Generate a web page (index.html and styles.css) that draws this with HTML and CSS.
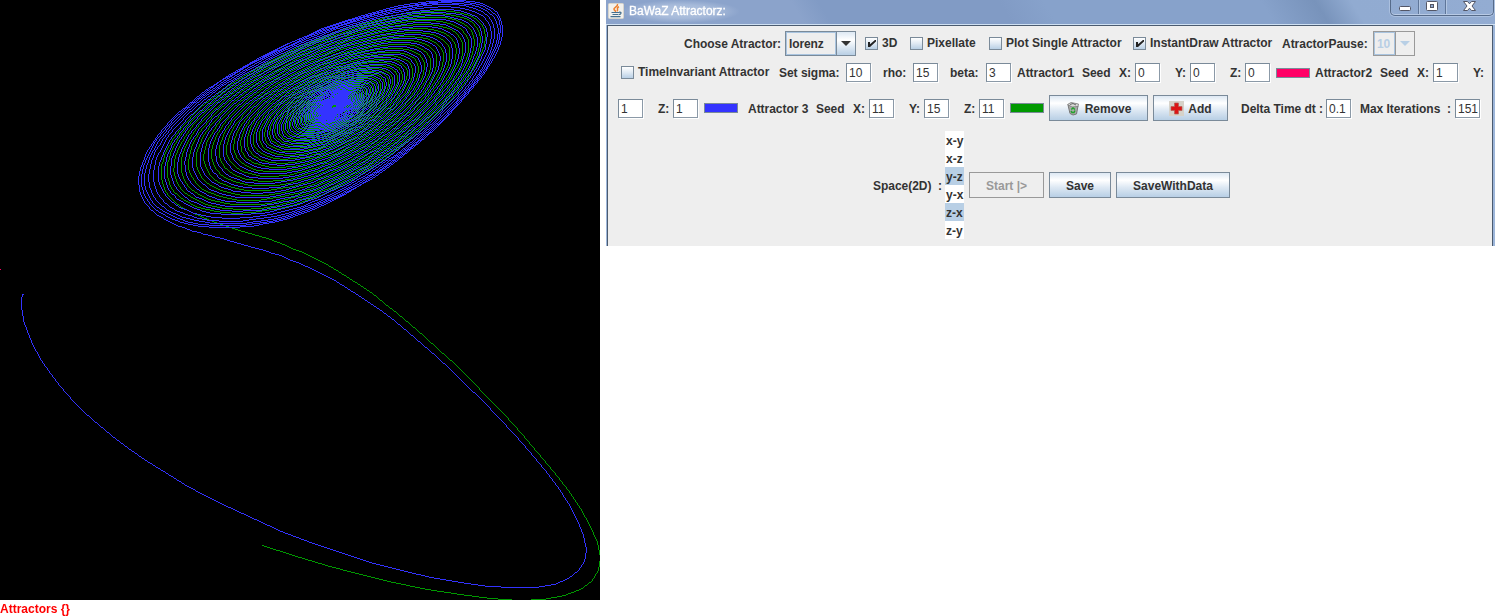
FILE: index.html
```html
<!DOCTYPE html>
<html lang="en">
<head>
<meta charset="utf-8">
<title>BaWaZ Attractorz</title>
<link rel="stylesheet" href="styles.css">
</head>
<body>
<main class="page">
  <section class="plot-panel">
    <canvas class="plot" id="plot" width="600" height="600"></canvas>
    <div class="plot-caption">Attractors {}</div>
  </section>

  <section class="window">
    <header class="titlebar">
      <svg class="java-icon" width="16" height="16" viewBox="0 0 16 16">
        <rect x=".5" y=".5" width="15" height="15" rx="1" fill="#f2f1ed" stroke="#d8d5cd"/>
        <path d="M9.500 1C10.500 3.500 5 4.500 6 6.500C6.600 7.500 8 7.700 7.500 9M11 3.800C7.500 5.200 11 6.300 9 8.200" fill="none" stroke="#ec7f2e" stroke-width="1.500"/>
        <path d="M3.500 9.500h8M4.500 11.500h5.500M2.500 13.700h10M11 9.300c3-.6 2.600 2.200-.5 2.400" fill="none" stroke="#45708f" stroke-width="1.200"/>
      </svg>
      <span class="title">BaWaZ Attractorz:</span>
      <div class="window-buttons">
        <svg class="window-glyphs" width="102" height="15" viewBox="0 0 102 15">
          <path d="M27.500 0v14M54.500 0v14" stroke="#5f7699"/>
          <path d="M28.500 0v14M55.500 0v14" stroke="#b3c7e3"/>
          <rect x="8.500" y="6.500" width="11" height="4" rx="1" fill="#fff" stroke="#535666"/>
          <rect x="35.500" y="1.500" width="11" height="9" rx="1" fill="#fff" stroke="#535666"/>
          <rect x="39.500" y="4.500" width="3" height="3" fill="#8ea8ce" stroke="#535666"/>
          <path d="M72.500 1.500h4l2 2.300l2-2.300h4l-3.500 4.500l3.500 4.500h-4l-2-2.300l-2 2.300h-4l3.500-4.500z" fill="#fff" stroke="#535666"/>
        </svg>
      </div>
    </header>

    <div class="content">
      <div class="row row-options">
        <span>Choose Atractor:</span>
        <div class="combo"><span class="combo-value">lorenz</span><span class="combo-arrow"></span></div>
        <label class="check"><i class="box on"></i>3D</label>
        <label class="check"><i class="box"></i>Pixellate</label>
        <label class="check"><i class="box"></i>Plot Single Attractor</label>
        <label class="check"><i class="box on"></i>InstantDraw Attractor</label>
        <span>AtractorPause:</span>
        <div class="combo combo-off"><span class="combo-value">10</span><span class="combo-arrow"></span></div>
      </div>

      <div class="row row-params">
        <label class="check"><i class="box"></i>TimeInvariant Attractor</label>
        <span>Set sigma:</span><span class="field">10</span>
        <span>rho:</span><span class="field">15</span>
        <span>beta:</span><span class="field">3</span>
        <span>Attractor1</span><span>Seed</span>
        <span>X:</span><span class="field">0</span>
        <span>Y:</span><span class="field">0</span>
        <span>Z:</span><span class="field">0</span>
        <span class="swatch pink"></span>
        <span>Attractor2</span><span>Seed</span>
        <span>X:</span><span class="field">1</span>
        <span>Y:</span>
      </div>

      <div class="row row-seeds">
        <span class="field">1</span>
        <span>Z:</span><span class="field">1</span>
        <span class="swatch blue"></span>
        <span>Attractor 3</span><span>Seed</span>
        <span>X:</span><span class="field">11</span>
        <span>Y:</span><span class="field">15</span>
        <span>Z:</span><span class="field">11</span>
        <span class="swatch green"></span>
        <span class="button remove">
          <svg width="14" height="15" viewBox="0 0 14 15">
            <path d="M2 4L12 5L10.500 13L7 14L4 12.500Z" fill="#a9aaa9" stroke="#777"/>
            <path d="M1.500 3.500L5 1.500L12.500 3L12 5.500L6 6Z" fill="#d9d9d7" stroke="#777" stroke-width=".8"/>
            <path d="M4 3.500L7 2.500L10 4" fill="none" stroke="#666"/>
            <path d="M5.300 8.500L7 7L9 8.500M9 9.500L8 11.500H6L5 10" fill="none" stroke="#22a32c" stroke-width="1.500"/>
          </svg>Remove</span>
        <span class="button add">
          <svg width="15" height="15" viewBox="0 0 15 15">
            <rect width="15" height="15" fill="#d6d2c9"/>
            <path d="M5.500 2H9.500V5.500H13V9.500H9.500V13H5.500V9.500H2V5.500H5.500Z" fill="#dc1515" stroke="#b56058" stroke-width=".7"/>
          </svg>Add</span>
        <span>Delta Time dt :</span><span class="field">0.1</span>
        <span>Max Iterations&nbsp; :</span><span class="field">151</span>
      </div>

      <div class="row row-actions">
        <span>Space(2D)&nbsp; :</span>
        <ul class="list">
          <li>x-y</li><li>x-z</li><li class="selected">y-z</li><li>y-x</li><li class="selected">z-x</li><li>z-y</li>
        </ul>
        <span class="button disabled">Start |&gt;</span>
        <span class="button">Save</span>
        <span class="button">SaveWithData</span>
      </div>
    </div>
  </section>
</main>
<script src="plot.js"></script>
</body>
</html>
```
FILE: styles.css
```css
* { box-sizing: border-box; }
body {
  margin: 0;
  background: #fff;
  color: #333;
  font: bold 12px/15px "Liberation Sans", Arial, sans-serif;
}
.page { display: flex; align-items: flex-start; gap: 6px; width: 1502px; height: 616px; overflow: hidden; }
.plot-panel { width: 600px; flex: none; }
.plot { display: block; background: #000; }
.plot-caption { color: #f00; height: 16px; line-height: 18px; white-space: nowrap; }

.window {
  width: 889px; height: 246px; flex: none;
  display: flex; flex-direction: column;
  padding: 0 2px 0 1px;
  background: #9db6da;
}
.titlebar {
  display: flex; align-items: flex-start;
  height: 25px; flex: none; margin: 0 -2px 0 -1px; padding: 3px 1px 0 2px;
  border-bottom: 1px solid #cfe0f2;
  background: linear-gradient(58deg, #8ba3cb 0 22%, #819bc5 25% 45%, #87a2cb 50%, #87a2cb 74%, #7893bb 80%, #91abd1 84%, #93acd2 100%);
}
.java-icon { flex: none; }
.title {
  margin: -3px 0 0 -3px; padding: 3px 14px 3px 8px;
  color: #fff; font-weight: normal; font-size: 12px; line-height: 17px;
  -webkit-text-stroke: .3px #fff;
  background: radial-gradient(closest-side, rgba(197,212,234,.75), rgba(197,212,234,.45) 60%, transparent);
}
.window-buttons {
  margin: -3px 0 0 auto; height: 16px; width: 104px;
  border: 1px solid #566b8a; border-top: 0; border-radius: 0 0 5px 5px;
  box-shadow: 0 0 0 1px #abc0df, inset 0 -1px #b8cae5;
}
.window-glyphs { display: block; }

.content {
  flex: 1;
  display: flex; flex-direction: column;
  padding-top: 5px;
  background: #eee;
  border: 1px solid #4b5b6f; border-bottom: 0;
}
.row { display: grid; align-items: center; white-space: nowrap; line-height: 17px; }
.row-options {
  height: 25px; padding-left: 76px;
  grid-template-columns: 101px 80px 45px 79px 144px 149px 91px 42px;
}
.row-params {
  height: 19px; margin-top: 7px; padding-left: 13px;
  grid-template-columns: 158px 67px 37px 30px 37px 36px 31px 65px 37px 16px 40px 15px 40px 15px 31px 39px 65px 37px 16px 40px 15px;
}
.row-seeds {
  height: 26px; margin-top: 13px; padding-left: 10px;
  grid-template-columns: 40px 15px 31px 44px 68px 37px 16px 40px 15px 40px 15px 31px 39px 104px 88px 85px 34px 95px 25px;
}
.row-actions {
  height: 108px; margin-top: 10px; padding-left: 265px;
  grid-template-columns: 72px 24px 80px 67px 114px;
}
.row > span:not([class]) { padding-top: 2px; letter-spacing: -.03px; }

.check { display: flex; align-items: center; gap: 4px; line-height: 19px; height: 18px; }
.box {
  position: relative;
  width: 13px; height: 13px; flex: none;
  border: 1px solid #7a8a99;
  background: linear-gradient(#fff, #dfe9f3 50%, #b8cfe5);
}
.box.on::after {
  content: ""; position: absolute; left: 2px; top: 2px; width: 8px; height: 7px;
  background: #222; clip-path: polygon(0 28%, 25% 28%, 25% 60%, 87% 0, 100% 0, 100% 22%, 25% 100%, 0 100%);
}
.field {
  width: 25px; height: 19px; padding: 0 0 0 2px;
  border: 1px solid #7a8a99; border-right-color: #8b99a7; border-bottom-color: #8b99a7;
  box-shadow: 1px 1px #fff;
  background: #fff; font-weight: normal; line-height: 18px;
}
.swatch { width: 34px; height: 10px; border: 1px solid #7a8a99; }
.pink { background: #ff0066; }
.blue { background: #3333ff; }
.green { background: #009900; }

.combo { display: flex; width: 71px; height: 25px; border: 1px solid #7a8a99; }
.combo-value {
  flex: 1; padding-left: 2px; line-height: 22px; letter-spacing: -.1px;
  border: 1px solid #a9c4df;
}
.combo-arrow {
  width: 19px; border-left: 1px solid #7a8a99;
  display: flex; align-items: center; justify-content: center;
  background: linear-gradient(#dde8f3, #fff 35%, #b8cfe5);
}
.combo-arrow::before {
  content: ""; border: 5px solid transparent; border-top-color: #333; border-bottom: 0;
}
.combo-off { width: 42px; border-color: #999; color: #b8cfe5; }
.combo-off .combo-arrow { background: none; border-left-color: #999; }
.combo-off .combo-arrow::before { border-top-color: #b8cfe5; }

.button {
  display: flex; align-items: center; justify-content: center;
  height: 26px; width: 62px; padding-top: 1px; line-height: 18px;
  border: 1px solid #7a8a99;
  background: linear-gradient(#dde8f3, #fff 30%, #dde8f3 60%, #b8cfe5);
}
.button:last-child { width: 114px; }
.remove { width: 99px; gap: 5px; }
.add { width: 75px; gap: 4px; }
.disabled { width: 75px; border-color: #999; background: none; color: #999; }

.list { width: 19px; margin: 0; padding: 0; list-style: none; background: #fff; }
.list li { height: 18px; padding-left: 1px; line-height: 20px; }
.selected { background: #b8cfe5; }
```
FILE: plot.js
```js
// Lorenz trajectories projected on the z-x plane, scaled to fill the canvas.
const SIGMA = 10, RHO = 15, BETA = 3, DT = 0.01, STEPS = 5000;
const SIZE = 600;
const seeds = [
  { p: [0, 0, 0], color: '#ff0066' },
  { p: [1, 1, 1], color: '#3333ff' },
  { p: [11, 15, 11], color: '#009900' }
];

function trajectory([x, y, z]) {
  const points = [[z, x]];
  for (let i = 0; i < STEPS; i++) {
    const dx = SIGMA * (y - x), dy = x * (RHO - z) - y, dz = x * y - BETA * z;
    x += dx * DT; y += dy * DT; z += dz * DT;
    points.push([z, x]);
  }
  return points;
}

const ctx = document.getElementById('plot').getContext('2d');

function line(x0, y0, x1, y1) {
  const dx = Math.abs(x1 - x0), dy = -Math.abs(y1 - y0);
  const sx = x0 < x1 ? 1 : -1, sy = y0 < y1 ? 1 : -1;
  let err = dx + dy;
  for (;;) {
    ctx.fillRect(x0, y0, 1, 1);
    if (x0 === x1 && y0 === y1) return;
    const e2 = 2 * err;
    if (e2 >= dy) { err += dy; x0 += sx; }
    if (e2 <= dx) { err += dx; y0 += sy; }
  }
}

const tracks = seeds.map(s => trajectory(s.p));
const all = tracks.flat();
const min = [0, 1].map(k => Math.min(...all.map(p => p[k])));
const max = [0, 1].map(k => Math.max(...all.map(p => p[k])));
const project = p => [0, 1].map(k => Math.floor((p[k] - min[k]) / (max[k] - min[k]) * SIZE));

for (let i = 0; i < STEPS; i++) {
  for (const t of [0, 2, 1]) {
    ctx.fillStyle = seeds[t].color;
    line(...project(tracks[t][i]), ...project(tracks[t][i + 1]));
  }
}
```
